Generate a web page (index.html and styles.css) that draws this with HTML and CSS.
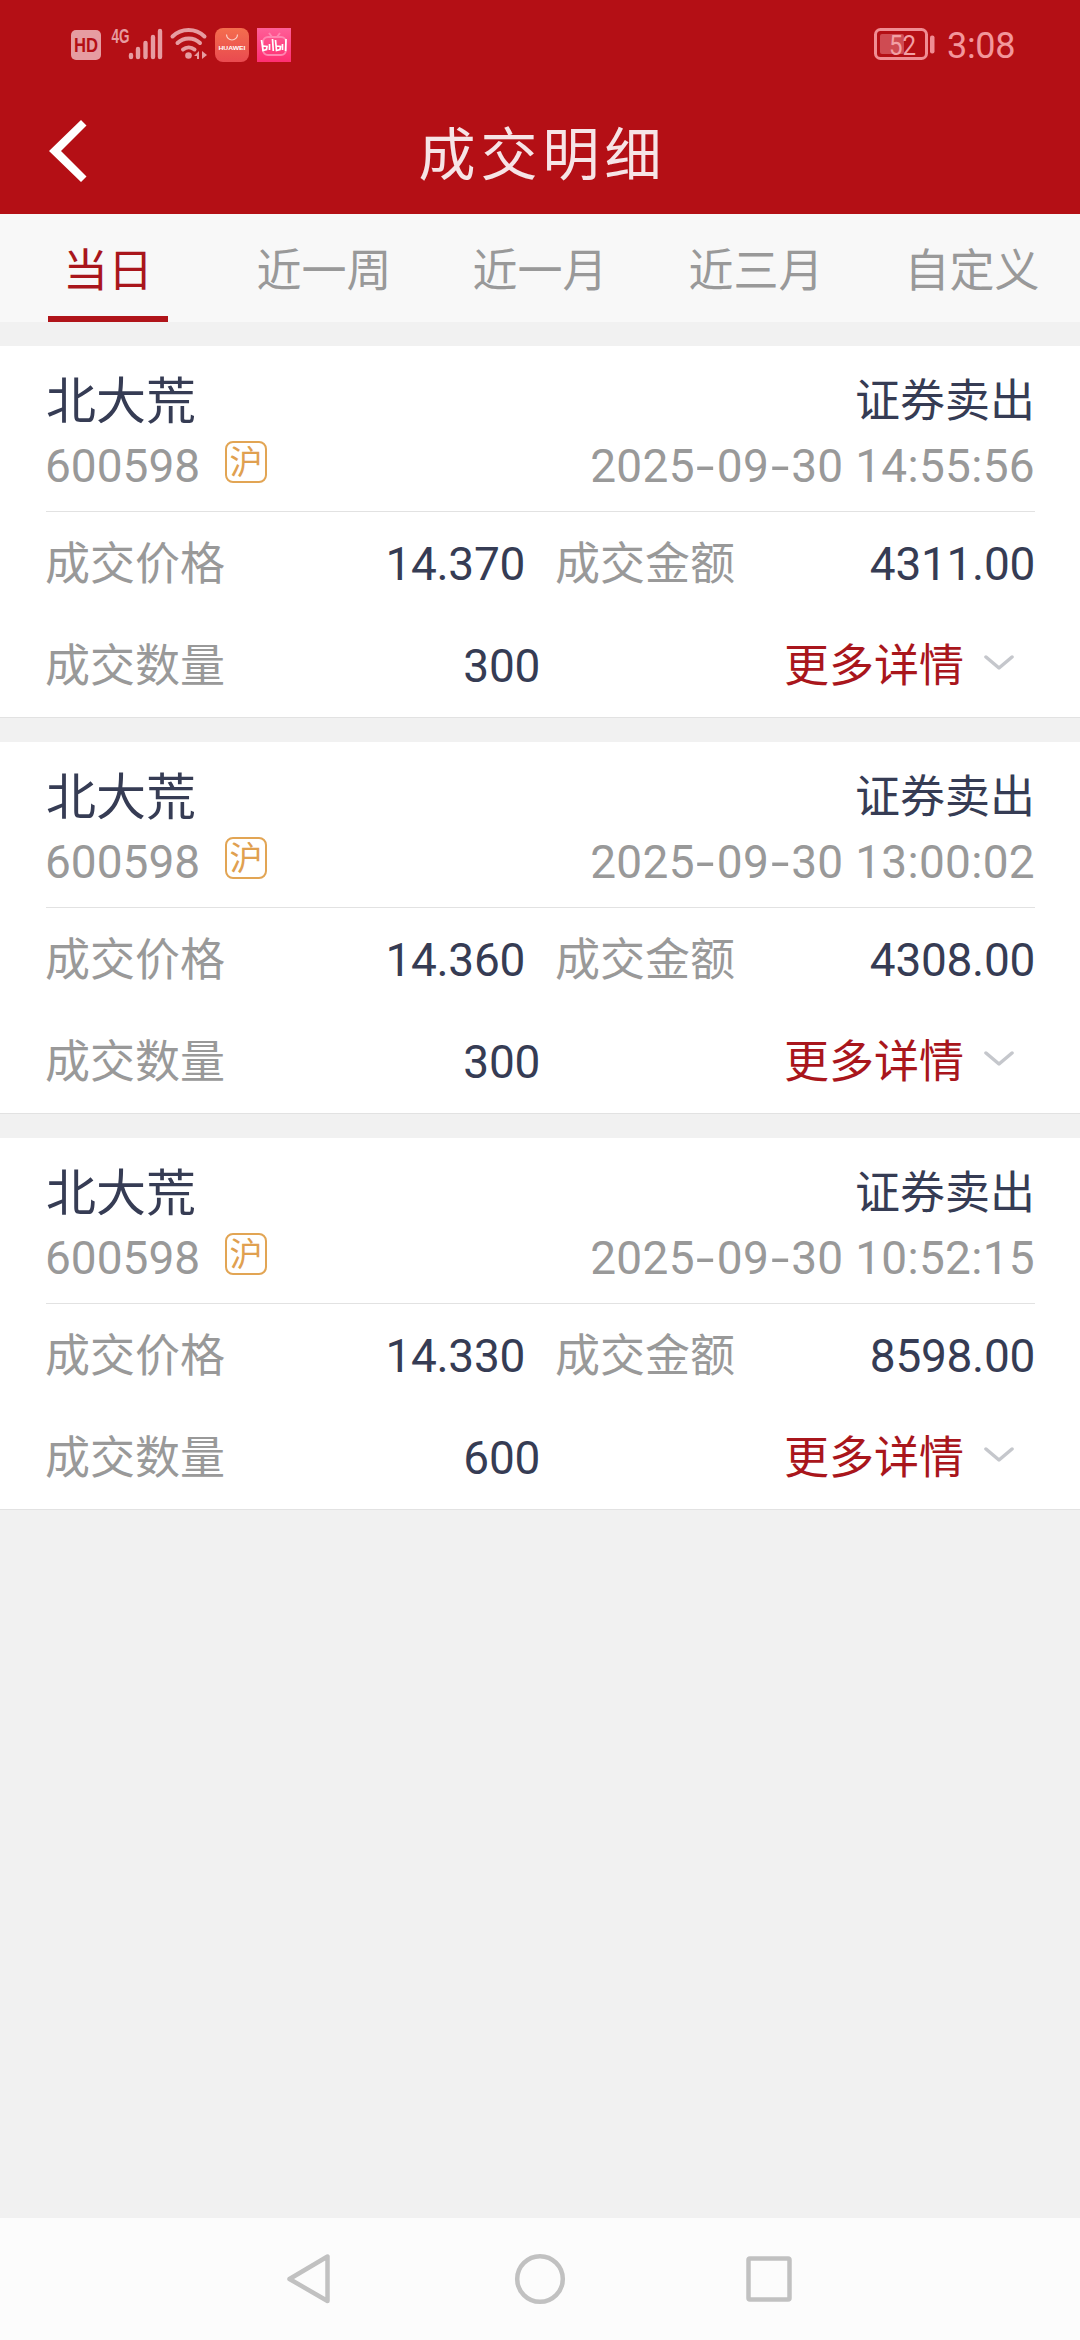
FILE: index.html
```html
<!DOCTYPE html>
<html lang="zh-CN">
<head>
<meta charset="utf-8">
<title>成交明细</title>
<link rel="stylesheet" href="styles.css">
</head>
<body>
<div class="screen">
  <header class="header">
    <div class="status">
      <svg class="status-icons" width="240" height="60" viewBox="60 15 240 60">
        <rect x="71" y="30" width="30" height="30" rx="5" fill="#e69ca1"/>
        <text x="74" y="52" class="hd" textLength="24" lengthAdjust="spacingAndGlyphs">HD</text>
        <text x="111.5" y="43" class="net" textLength="18" lengthAdjust="spacingAndGlyphs">4G</text>
        <g stroke="#e69ca1" stroke-width="4.4" stroke-linecap="round" fill="none">
          <path d="M131 55v2M138 49v8M145.500 43v14M153 37v20M160 31v26"/>
          <path d="M172.500 36.500a23 23 0 0 1 32 0M177.500 43a16 16 0 0 1 22.500 0M183 49.500a9 9 0 0 1 11.500 0" stroke-width="4"/>
        </g>
        <circle cx="188.500" cy="55.500" r="3.300" fill="#e69ca1"/>
        <path d="M194 56l5-5v8h-2v-3zM202 51l5 4-5 4z" fill="#e69ca1"/>
        <defs>
          <linearGradient id="hw" x2="0" y2="1"><stop stop-color="#f46e4e"/><stop offset="1" stop-color="#e94a50"/></linearGradient>
          <linearGradient id="bl" x2="0" y2="1"><stop stop-color="#ff5f98"/><stop offset="1" stop-color="#ff2e72"/></linearGradient>
        </defs>
        <rect x="215" y="28" width="34" height="34" rx="8" fill="url(#hw)"/>
        <path d="M226.500 34.500a5.500 5.500 0 0 0 11 0" fill="none" stroke="#fbcfc5" stroke-width="1.200"/>
        <text x="218.500" y="49.500" class="hw" textLength="27" lengthAdjust="spacingAndGlyphs">HUAWEI</text>
        <rect x="257" y="28" width="34" height="34" fill="url(#bl)"/>
        <g fill="none" stroke="#ff85b0" stroke-width="2"><rect x="263" y="37" width="23" height="18" rx="5"/><path d="M269 33l3 4M280 33l-3 4"/></g>
        <path d="M261.500 40l1.500 10.500 3.500-1 .5-3-4-.5M269.500 44v6M272.500 39l.8 12M275.500 40l1 10.500 3.500-1 .5-3-4-.5M282.500 44v6M286 39l-.5 12" fill="none" stroke="#fff" stroke-width="1.700"/>
      </svg>
      <div class="status-right">
        <svg width="62" height="34" viewBox="874 27 62 34">
          <rect x="875.500" y="29.500" width="51" height="29" rx="5" fill="none" stroke="#f08d93" stroke-width="3"/>
          <rect x="880" y="34" width="24" height="20" rx="2" fill="#cf4b52"/>
          <rect x="930" y="35.500" width="4.500" height="18" rx="2" fill="#f08d93"/>
          <text x="889" y="55" class="pct" textLength="27" lengthAdjust="spacingAndGlyphs">52</text>
        </svg>
        <span class="clock">3:08</span>
      </div>
    </div>
    <div class="titlebar">
      <svg class="back" width="40" height="64" viewBox="48 119 40 64"><path d="M49 151L81 120l5.500 5.500L61 151l25.500 25.500L81 182z" fill="#fff"/></svg>
      <h1 class="title">成交明细</h1>
    </div>
  </header>
  <nav class="tabs">
    <div class="tab active">当日</div>
    <div class="tab">近一周</div>
    <div class="tab">近一月</div>
    <div class="tab">近三月</div>
    <div class="tab">自定义</div>
  </nav>
  <main class="list">
    <section class="card">
      <div class="head">
        <div class="row name-row"><span class="name">北大荒</span><span class="side">证券卖出</span></div>
        <div class="row code-row"><span class="code">600598</span><span class="badge">沪</span><span class="time">2025<i>-</i>09<i>-</i>30 14:55:56</span></div>
      </div>
      <div class="row data-row"><span class="label">成交价格</span><span class="num price">14.370</span><span class="label second">成交金额</span><span class="num amount">4311.00</span></div>
      <div class="row data-row"><span class="label">成交数量</span><span class="num qty">300</span><span class="more">更多详情</span><svg class="chev" width="30" height="18" viewBox="0 0 30 18"><path d="M2 3l13 11L28 3"/></svg></div>
    </section>
    <section class="card">
      <div class="head">
        <div class="row name-row"><span class="name">北大荒</span><span class="side">证券卖出</span></div>
        <div class="row code-row"><span class="code">600598</span><span class="badge">沪</span><span class="time">2025<i>-</i>09<i>-</i>30 13:00:02</span></div>
      </div>
      <div class="row data-row"><span class="label">成交价格</span><span class="num price">14.360</span><span class="label second">成交金额</span><span class="num amount">4308.00</span></div>
      <div class="row data-row"><span class="label">成交数量</span><span class="num qty">300</span><span class="more">更多详情</span><svg class="chev" width="30" height="18" viewBox="0 0 30 18"><path d="M2 3l13 11L28 3"/></svg></div>
    </section>
    <section class="card">
      <div class="head">
        <div class="row name-row"><span class="name">北大荒</span><span class="side">证券卖出</span></div>
        <div class="row code-row"><span class="code">600598</span><span class="badge">沪</span><span class="time">2025<i>-</i>09<i>-</i>30 10:52:15</span></div>
      </div>
      <div class="row data-row"><span class="label">成交价格</span><span class="num price">14.330</span><span class="label second">成交金额</span><span class="num amount">8598.00</span></div>
      <div class="row data-row"><span class="label">成交数量</span><span class="num qty">600</span><span class="more">更多详情</span><svg class="chev" width="30" height="18" viewBox="0 0 30 18"><path d="M2 3l13 11L28 3"/></svg></div>
    </section>
  </main>
  <footer class="nav">
    <svg width="1080" height="122" viewBox="0 2218 1080 122" fill="none" stroke="#c1c1c1" stroke-width="4.500" stroke-linejoin="round">
      <path d="M327.500 2256.500v44.500L289.500 2279z"/>
      <circle cx="540" cy="2279" r="22.800"/>
      <rect x="748.500" y="2258.500" width="41" height="41" rx="1.500"/>
    </svg>
  </footer>
</div>
</body>
</html>
```
FILE: styles.css
```css
* { box-sizing: border-box; }
body { margin: 0; font-family: Lato, "Noto Sans CJK SC", sans-serif; background: #f1f1f1; }
.screen { width: 1080px; height: 2340px; display: flex; flex-direction: column; overflow: hidden; }

.header { height: 214px; background: #b40f15; display: flex; flex-direction: column; }
.status { height: 90px; display: flex; justify-content: space-between; padding: 15px 0 0 60px; }
.status-right { display: flex; width: 206px; padding-top: 12px; gap: 11px; }
.hd { font: bold 20px "Liberation Sans", sans-serif; fill: #b40f15; }
.net { font: bold 20px "Liberation Sans", sans-serif; fill: #e69ca1; }
.hw { font: bold 6px "Liberation Sans", sans-serif; fill: #fff; }
.pct { font: 27px Roboto, sans-serif; fill: #f2a0a5; }
.clock { font-family: Roboto, sans-serif; font-size: 36px; line-height: 39px; letter-spacing: -0.3px; color: #f2969b; }
.titlebar { height: 124px; display: flex; align-items: flex-start; padding: 27px 0 0 48px; }
.back { margin-top: 2px; }
.title { flex: 1; margin: 0 87px 0 0; padding-left: 4px; text-align: center; font-weight: 400; font-size: 57px; line-height: 72px; letter-spacing: 5px; color: #f6e4e6; }

.tabs { height: 108px; display: grid; grid-template-columns: repeat(5, 216px); background: #f8f8f8; font-size: 45px; line-height: 112px; color: #999; text-align: center; }
.tab.active { color: #a9161c; width: 120px; margin-left: 48px; border-bottom: 6px solid #b0141a; height: 108px; }

.list { flex: 1; padding-top: 24px; display: flex; flex-direction: column; gap: 24px; }
.card { height: 372px; padding: 0 45px 0 46px; background: #fff; border-bottom: 1px solid #e2e2e2; }
.row { display: flex; align-items: center; white-space: nowrap; }
.head { height: 166px; border-bottom: 1px solid #e2e2e2; }
.name-row { height: 90px; padding-top: 18px; justify-content: space-between; }
.name { font-size: 50px; line-height: 72px; color: #363c54; }
.side { font-size: 45px; line-height: 72px; color: #363c54; }
.code-row { height: 56px; padding-top: 3px; color: #999; font-size: 46px; line-height: 56px; }
.code { font-family: Roboto, sans-serif; width: 180px; margin-left: -1px; }
.badge { width: 42px; height: 42px; border: 2px solid #e2a554; border-radius: 8px; color: #e0a050; font-size: 33px; line-height: 36px; text-align: center; margin-top: -7px; }
.time { font-family: Roboto, sans-serif; margin-left: auto; letter-spacing: 0.3px; }
.time i { display: inline-block; font-style: normal; margin: 0 4.5px; transform: scaleX(1.45); }
.data-row { height: 102px; font-size: 45px; line-height: 102px; }
.label { color: #999; width: 181px; margin-left: -1px; }
.num { font-family: Roboto, sans-serif; font-size: 46px; letter-spacing: -0.3px; margin-top: 1px; color: #363c54; text-align: right; }
.price { width: 299px; }
.label.second { margin-left: 30px; }
.amount { margin-left: auto; }
.qty { width: 314px; }
.more { margin-left: 244px; color: #a9161c; }
.chev { margin-left: 20px; margin-top: -4px; fill: none; stroke: #c5c7cc; stroke-width: 3.5; stroke-linecap: round; stroke-linejoin: round; }

.nav { height: 122px; background: #fcfcfc; }
.nav svg { display: block; }
```
